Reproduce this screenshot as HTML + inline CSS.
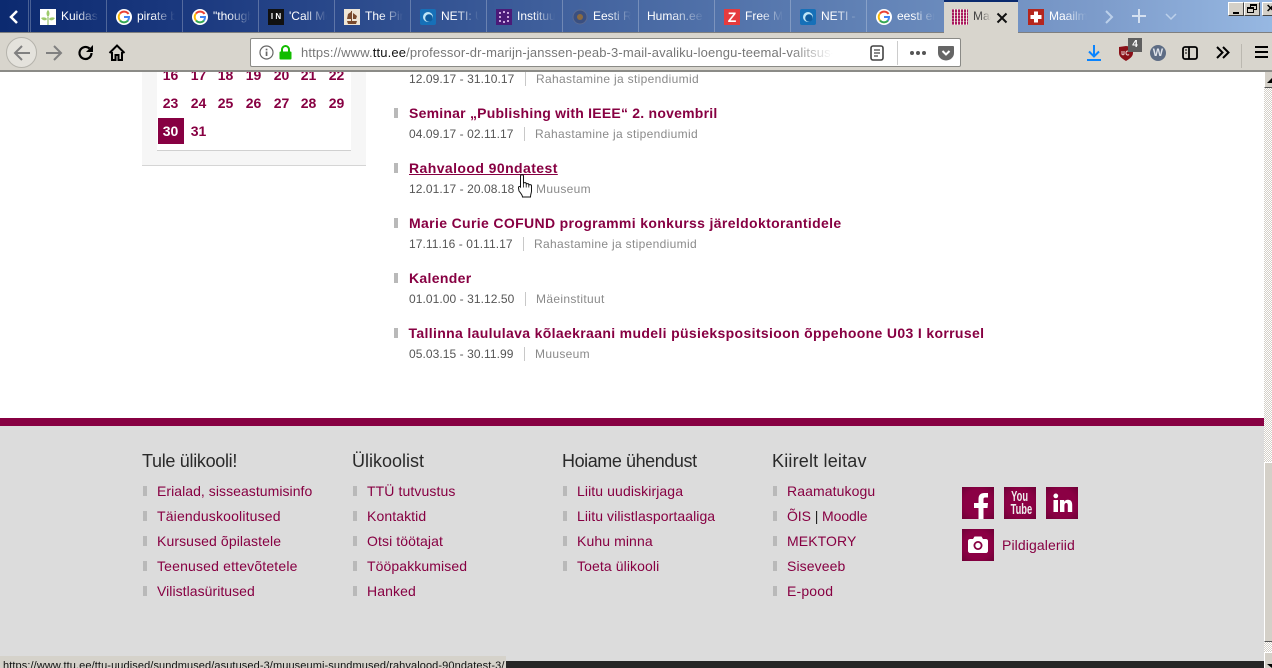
<!DOCTYPE html>
<html><head><meta charset="utf-8"><style>
*{box-sizing:border-box}
html,body{margin:0;padding:0;width:1272px;height:668px;overflow:hidden;background:#fff;font-family:"Liberation Sans",sans-serif}
.a{position:absolute;white-space:nowrap}
#tabs{position:absolute;left:0;top:0;width:1272px;height:33px;background:linear-gradient(90deg,#0c2a70 0,#1c3a80 200px,#3a5a98 500px,#5f80b4 850px,#7d9ccb 1100px,#97b8e2 1272px);border-bottom:1px solid #7f7f7f}
.sep{position:absolute;top:0;width:1px;height:32px;background:rgba(255,255,255,.25)}
.tt{position:absolute;top:9px;font-size:12px;line-height:15px;color:#fff;width:38px;overflow:hidden;white-space:nowrap;-webkit-mask-image:linear-gradient(90deg,#000 40%,transparent 100%);mask-image:linear-gradient(90deg,#000 40%,transparent 100%)}
.fi{position:absolute;top:9px;width:16px;height:16px}
#bar{position:absolute;left:0;top:33px;width:1272px;height:39px;background:#d8d5cd;border-bottom:2px solid #8b8b87}
.t{position:absolute;left:409px;font-size:14px;font-weight:bold;color:#870042;line-height:16px;white-space:nowrap;letter-spacing:.32px}
.d{position:absolute;left:409px;font-size:12px;color:#555;line-height:14px;white-space:nowrap;letter-spacing:.07px}
.c{position:absolute;font-size:12px;color:#8a8a8a;line-height:14px;white-space:nowrap;letter-spacing:.33px}
.v{position:absolute;width:1px;height:14px;background:#c8c8c8}
.b{position:absolute;left:394px;width:4px;height:10px;background:#b9b9b9}
.n{position:absolute;font-size:14px;font-weight:bold;color:#870042;line-height:16px;width:27px;text-align:center}
.h{position:absolute;font-size:18px;line-height:20px;color:#2a2a2a;white-space:nowrap}
.l{position:absolute;font-size:14px;line-height:16px;color:#870042;white-space:nowrap;letter-spacing:.1px}
.s{position:absolute;width:4px;height:10px;background:#b9b9b9}
.so{position:absolute;width:32px;height:32px;background:radial-gradient(circle,#8b0044 60%,#6e0036 100%)}
</style></head><body>

<!-- page content -->
<div class="a" style="left:142px;top:72px;width:224px;height:94px;background:#f6f6f6;border-bottom:1px solid #d5d5d5"></div>
<div class="a" style="left:157px;top:72px;width:194px;height:79px;background:#fff;border-bottom:1px solid #d0d0d0"></div>
<div class="n" style="left:157px;top:67px">16</div><div class="n" style="left:185px;top:67px">17</div><div class="n" style="left:212px;top:67px">18</div><div class="n" style="left:240px;top:67px">19</div><div class="n" style="left:268px;top:67px">20</div><div class="n" style="left:295px;top:67px">21</div><div class="n" style="left:323px;top:67px">22</div>
<div class="n" style="left:157px;top:95px">23</div><div class="n" style="left:185px;top:95px">24</div><div class="n" style="left:212px;top:95px">25</div><div class="n" style="left:240px;top:95px">26</div><div class="n" style="left:268px;top:95px">27</div><div class="n" style="left:295px;top:95px">28</div><div class="n" style="left:323px;top:95px">29</div>
<div class="a" style="left:158px;top:118px;width:26px;height:26px;background:#870042"></div>
<div class="n" style="left:157px;top:123px;color:#fff">30</div><div class="n" style="left:185px;top:123px">31</div>

<div class="d" style="top:72px">12.09.17 - 31.10.17</div><div class="v" style="left:525px;top:72px"></div><div class="c" style="left:536px;top:72px">Rahastamine ja stipendiumid</div>

<div class="b" style="top:108px"></div><div class="t" style="top:105px;letter-spacing:.227px">Seminar „Publishing with IEEE“ 2. novembril</div>
<div class="d" style="top:127px">04.09.17 - 02.11.17</div><div class="v" style="left:524px;top:127px"></div><div class="c" style="left:535px;top:127px">Rahastamine ja stipendiumid</div>

<div class="b" style="top:163px"></div><div class="t" style="top:160px;text-decoration:underline;letter-spacing:.42px">Rahvalood 90ndatest</div>
<div class="d" style="top:182px">12.01.17 - 20.08.18</div><div class="v" style="left:525px;top:182px"></div><div class="c" style="left:536px;top:182px">Muuseum</div>

<div class="b" style="top:218px"></div><div class="t" style="top:215px;letter-spacing:.355px">Marie Curie COFUND programmi konkurss järeldoktorantidele</div>
<div class="d" style="top:237px">17.11.16 - 01.11.17</div><div class="v" style="left:523px;top:237px"></div><div class="c" style="left:534px;top:237px">Rahastamine ja stipendiumid</div>

<div class="b" style="top:273px"></div><div class="t" style="top:270px">Kalender</div>
<div class="d" style="top:292px">01.01.00 - 31.12.50</div><div class="v" style="left:525px;top:292px"></div><div class="c" style="left:536px;top:292px">Mäeinstituut</div>

<div class="b" style="top:328px"></div><div class="t" style="top:325px;left:408.5px;letter-spacing:.345px">Tallinna laululava kõlaekraani mudeli püsiekspositsioon õppehoone U03 I korrusel</div>
<div class="d" style="top:347px">05.03.15 - 30.11.99</div><div class="v" style="left:524px;top:347px"></div><div class="c" style="left:535px;top:347px">Muuseum</div>

<!-- hand cursor -->
<svg class="a" style="left:518px;top:174px" width="16" height="24" viewBox="0 0 16 24"><path d="M2.500 11V2c0-1.700 3-1.700 3 0v7.500c0-1.200 2.700-1.200 2.700 0v1c0-1.200 2.600-1.200 2.600 0v1c0-1.200 2.700-1.200 2.700 0.300V17c0 2-1 3-1 6H4.500c0-2-2-4-3.500-6L.5 14c-.4-1.400 1.200-2 2-1z" fill="#fff" stroke="#111" stroke-width="1"/><path d="M5.500 9.500v4M8.200 10.500v3M10.800 11.500v2" stroke="#111" stroke-width=".8" fill="none"/></svg>

<!-- footer -->
<div class="a" style="left:0;top:418px;width:1264px;height:8px;background:#870042"></div>
<div class="a" style="left:0;top:426px;width:1264px;height:235px;background:#dcdcdc"></div>
<div class="a" style="left:0;top:661px;width:1264px;height:7px;background:#262626"></div>

<div class="h" style="left:142px;top:451px;letter-spacing:-.31px">Tule ülikooli!</div>
<div class="h" style="left:352px;top:451px;letter-spacing:0">Ülikoolist</div>
<div class="h" style="left:562px;top:451px;letter-spacing:-.43px">Hoiame ühendust</div>
<div class="h" style="left:772px;top:451px;letter-spacing:.19px">Kiirelt leitav</div>

<div class="s" style="left:143px;top:486px"></div><div class="l" style="left:157px;top:483px;letter-spacing:.05px">Erialad, sisseastumisinfo</div>
<div class="s" style="left:143px;top:511px"></div><div class="l" style="left:157px;top:508px;letter-spacing:.17px">Täienduskoolitused</div>
<div class="s" style="left:143px;top:536px"></div><div class="l" style="left:157px;top:533px">Kursused õpilastele</div>
<div class="s" style="left:143px;top:561px"></div><div class="l" style="left:157px;top:558px;letter-spacing:.17px">Teenused ettevõtetele</div>
<div class="s" style="left:143px;top:586px"></div><div class="l" style="left:157px;top:583px;letter-spacing:.05px">Vilistlasüritused</div>

<div class="s" style="left:353px;top:486px"></div><div class="l" style="left:367px;top:483px">TTÜ tutvustus</div>
<div class="s" style="left:353px;top:511px"></div><div class="l" style="left:367px;top:508px">Kontaktid</div>
<div class="s" style="left:353px;top:536px"></div><div class="l" style="left:367px;top:533px">Otsi töötajat</div>
<div class="s" style="left:353px;top:561px"></div><div class="l" style="left:367px;top:558px">Tööpakkumised</div>
<div class="s" style="left:353px;top:586px"></div><div class="l" style="left:367px;top:583px">Hanked</div>

<div class="s" style="left:563px;top:486px"></div><div class="l" style="left:577px;top:483px">Liitu uudiskirjaga</div>
<div class="s" style="left:563px;top:511px"></div><div class="l" style="left:577px;top:508px;letter-spacing:.08px">Liitu vilistlasportaaliga</div>
<div class="s" style="left:563px;top:536px"></div><div class="l" style="left:577px;top:533px">Kuhu minna</div>
<div class="s" style="left:563px;top:561px"></div><div class="l" style="left:577px;top:558px">Toeta ülikooli</div>

<div class="s" style="left:773px;top:486px"></div><div class="l" style="left:787px;top:483px">Raamatukogu</div>
<div class="s" style="left:773px;top:511px"></div><div class="l" style="left:787px;top:508px;letter-spacing:-.08px">ÕIS <span style="color:#222">|</span> Moodle</div>
<div class="s" style="left:773px;top:536px"></div><div class="l" style="left:787px;top:533px">MEKTORY</div>
<div class="s" style="left:773px;top:561px"></div><div class="l" style="left:787px;top:558px">Siseveeb</div>
<div class="s" style="left:773px;top:586px"></div><div class="l" style="left:787px;top:583px;letter-spacing:.17px">E-pood</div>

<div class="so" style="left:962px;top:487px"><svg width="32" height="32" style="display:block"><path d="M16.500 32V21H12v-5h4.500v-4c0-4 2-6 6-6H26v4.500h-2.500c-1.500 0-2 .5-2 2V16H26l-.5 5h-4v11z" fill="#fff"/></svg></div>
<div class="so" style="left:1004px;top:487px;color:#eee;text-align:center;font-weight:bold;font-size:15px;line-height:13px;padding-top:3px;overflow:hidden"><span style="display:inline-block;transform:scaleX(.62)">You</span><br><span style="display:inline-block;transform:scaleX(.62)">Tube</span></div>
<div class="so" style="left:1046px;top:487px"><svg width="32" height="32" style="display:block"><path d="M7.500 13H12v12H7.500zM9.800 6.500a2.400 2.400 0 1 1 0 4.800 2.400 2.400 0 0 1 0-4.800zM14 13h4.200v1.700c.8-1.200 2-2 3.700-2 3 0 4.300 2 4.300 5V25h-4.400v-6.500c0-1.700-.4-2.500-1.600-2.500s-1.800 1-1.800 2.600V25H14z" fill="#fff"/></svg></div>
<div class="so" style="left:962px;top:529px"><svg width="32" height="32" style="display:block"><path d="M8 10h3l1.500-2.500h7L21 10h3c1 0 2 .8 2 2v10c0 1-1 2-2 2H8c-1 0-2-1-2-2V12c0-1.200 1-2 2-2z" fill="#fff"/><circle cx="16" cy="16.500" r="4.500" fill="#870042"/><circle cx="16" cy="16.500" r="2.700" fill="#fff"/></svg></div>
<div class="l" style="left:1002px;top:537px">Pildigaleriid</div>

<!-- status -->
<div class="a" style="left:0;top:656px;width:506px;height:12px;background:#d5d2ca;overflow:hidden;font-size:11px;line-height:15px;padding:3px 0 0 3px;color:#111;letter-spacing:.1px">https://www.ttu.ee/ttu-uudised/sundmused/asutused-3/muuseumi-sundmused/rahvalood-90ndatest-3/</div>

<!-- scrollbar -->
<div class="a" style="left:1264px;top:72px;width:8px;height:596px;background-color:#fff;background-image:repeating-conic-gradient(#d4d0c8 0 25%,#fff 0 50%);background-size:2px 2px"></div>
<div class="a" style="left:1264px;top:72px;width:8px;height:16px;background:#d4d0c8;border-left:1px solid #fff;border-bottom:1px solid #555"></div>
<div class="a" style="left:1267px;top:78px;width:0;height:0;border-left:5px solid transparent;border-right:5px solid transparent;border-bottom:5px solid #000"></div>
<div class="a" style="left:1264px;top:462px;width:8px;height:180px;background:#d4d0c8;border-left:1px solid #fff;border-top:1px solid #fff;border-bottom:1px solid #555"></div>
<div class="a" style="left:1264px;top:652px;width:8px;height:16px;background:#d4d0c8;border-left:1px solid #fff;border-top:1px solid #fff"></div>
<div class="a" style="left:1267px;top:664px;width:0;height:0;border-left:5px solid transparent;border-right:5px solid transparent;border-top:4px solid #000"></div>

<!-- tab strip -->
<div id="tabs">
<svg class="a" style="left:8px;top:9px" width="12" height="16"><path d="M9 2L3 8l6 6" fill="none" stroke="#fff" stroke-width="2.500"/></svg>
<div class="sep" style="left:28px"></div><div class="sep" style="left:30px"></div><div class="sep" style="left:106px"></div><div class="sep" style="left:182px"></div><div class="sep" style="left:258px"></div><div class="sep" style="left:334px"></div><div class="sep" style="left:410px"></div><div class="sep" style="left:486px"></div><div class="sep" style="left:562px"></div><div class="sep" style="left:638px"></div><div class="sep" style="left:714px"></div><div class="sep" style="left:790px"></div><div class="sep" style="left:866px"></div>

<svg class="fi" style="left:40px" viewBox="0 0 16 16"><rect width="16" height="16" fill="#fff"/><path d="M8 1c2 2 2 5 0 7-2-2-2-5 0-7zM7 10c-1 2-4 2-6-1 2-1 5-1 6 1zM9 10c1 2 4 2 6-1-2-1-5-1-6 1z" fill="#9dca6a"/><rect x="7.500" y="8" width="1" height="8" fill="#7fb04a"/></svg>
<div class="tt" style="left:61px">Kuidas t</div>
<svg class="fi" style="left:116px" viewBox="0 0 16 16"><circle cx="8" cy="8" r="8" fill="#fff"/><path d="M12.500 5A5.300 5.300 0 0 0 4 4.500" fill="none" stroke="#ea4335" stroke-width="2"/><path d="M4 4.500a5.300 5.300 0 0 0 0 7" fill="none" stroke="#fbbc05" stroke-width="2"/><path d="M4 11.500a5.300 5.300 0 0 0 8 0" fill="none" stroke="#34a853" stroke-width="2"/><path d="M8 8h5c0 1.500-.3 2.500-1 3.500" fill="none" stroke="#4285f4" stroke-width="2"/></svg>
<div class="tt" style="left:137px">pirate b</div>
<svg class="fi" style="left:192px" viewBox="0 0 16 16"><circle cx="8" cy="8" r="8" fill="#fff"/><path d="M12.500 5A5.300 5.300 0 0 0 4 4.500" fill="none" stroke="#ea4335" stroke-width="2"/><path d="M4 4.500a5.300 5.300 0 0 0 0 7" fill="none" stroke="#fbbc05" stroke-width="2"/><path d="M4 11.500a5.300 5.300 0 0 0 8 0" fill="none" stroke="#34a853" stroke-width="2"/><path d="M8 8h5c0 1.500-.3 2.500-1 3.500" fill="none" stroke="#4285f4" stroke-width="2"/></svg>
<div class="tt" style="left:213px">"though</div>
<div class="fi a" style="left:268px;background:#111;color:#fff;font-size:8px;line-height:16px;text-align:center;font-weight:bold">I N</div>
<div class="tt" style="left:289px">'Call Me</div>
<svg class="fi" style="left:344px" viewBox="0 0 16 16"><rect width="16" height="16" fill="#efe6d6"/><path d="M3 12h10l-1 3H4zM7 2h1v10H7zM4 5l3-2v7H3zM9 4l4 3-1 3H9z" fill="#7a4a2c"/></svg>
<div class="tt" style="left:365px">The Pira</div>
<svg class="fi" style="left:420px" viewBox="0 0 16 16"><rect width="16" height="16" rx="2" fill="#1670b8"/><circle cx="8" cy="8" r="5" fill="#bfe6f7"/><circle cx="9" cy="9" r="3.800" fill="#0f5c9e"/></svg>
<div class="tt" style="left:441px">NETI: U</div>
<svg class="fi" style="left:496px" viewBox="0 0 16 16"><rect width="16" height="16" fill="#4b1a78"/><g fill="#c9a6dd"><rect x="3" y="3" width="2" height="2"/><rect x="7" y="2" width="2" height="2"/><rect x="11" y="3" width="2" height="2"/><rect x="3" y="7" width="2" height="2"/><rect x="11" y="7" width="2" height="2"/><rect x="3" y="11" width="2" height="2"/><rect x="7" y="12" width="2" height="2"/><rect x="11" y="11" width="2" height="2"/></g></svg>
<div class="tt" style="left:517px">Instituu</div>
<svg class="fi" style="left:572px" viewBox="0 0 16 16"><circle cx="8" cy="8" r="7" fill="#3a4f80" stroke="#5a6a90"/><circle cx="8" cy="8" r="3" fill="#8a6a40"/></svg>
<div class="tt" style="left:593px">Eesti Re</div>
<div class="tt" style="left:647px;width:58px">Human.ee -</div>
<div class="fi a" style="left:724px;background:#e53b3e;color:#fff;font-size:14px;line-height:16px;text-align:center;font-weight:bold">Z</div>
<div class="tt" style="left:745px">Free Mo</div>
<svg class="fi" style="left:800px" viewBox="0 0 16 16"><rect width="16" height="16" rx="2" fill="#1670b8"/><circle cx="8" cy="8" r="5" fill="#bfe6f7"/><circle cx="9" cy="9" r="3.800" fill="#0f5c9e"/></svg>
<div class="tt" style="left:821px">NETI - E</div>
<svg class="fi" style="left:876px" viewBox="0 0 16 16"><circle cx="8" cy="8" r="8" fill="#fff"/><path d="M12.500 5A5.300 5.300 0 0 0 4 4.500" fill="none" stroke="#ea4335" stroke-width="2"/><path d="M4 4.500a5.300 5.300 0 0 0 0 7" fill="none" stroke="#fbbc05" stroke-width="2"/><path d="M4 11.500a5.300 5.300 0 0 0 8 0" fill="none" stroke="#34a853" stroke-width="2"/><path d="M8 8h5c0 1.500-.3 2.500-1 3.500" fill="none" stroke="#4285f4" stroke-width="2"/></svg>
<div class="tt" style="left:897px">eesti er</div>

<div class="a" style="left:944px;top:0;width:74px;height:33px;background:#d8d5cd;border-top:2px solid #0a2a6e"></div>
<div class="fi a" style="left:952px;background:repeating-linear-gradient(0deg,rgba(255,255,255,.35) 0 1px,transparent 1px 3px),repeating-linear-gradient(90deg,#a8195e 0 2px,#eed 2px 3px)"></div>
<div class="tt" style="left:973px;color:#444;width:18px">Maa</div>
<svg class="a" style="left:996px;top:12px" width="12" height="12"><path d="M1.500 1.500l9 9M10.500 1.500l-9 9" stroke="#111" stroke-width="2"/></svg>

<div class="fi a" style="left:1028px;background:#b5261e"></div>
<svg class="fi" style="left:1028px" viewBox="0 0 16 16"><path d="M6 2.500h4V6h3.500v4H10v3.500H6V10H2.500V6H6z" fill="#fff"/></svg>
<div class="tt" style="left:1049px">Maailma</div>
<svg class="a" style="left:1103px;top:9px" width="12" height="16"><path d="M3 2l6 6-6 6" fill="none" stroke="#bcd0ea" stroke-width="2"/></svg>
<svg class="a" style="left:1131px;top:8px" width="16" height="16"><path d="M8 1v14M1 8h14" stroke="#d4e0f0" stroke-width="2"/></svg>
<svg class="a" style="left:1165px;top:13px" width="12" height="8"><path d="M1 1l5 5 5-5" fill="none" stroke="#bcd0ea" stroke-width="1.500"/></svg>
</div>

<!-- window buttons -->
<div class="a" style="left:1228px;top:2px;width:16px;height:14px;background:#d4d0c8;border:1px solid;border-color:#fff #444 #444 #fff"><div class="a" style="left:4px;top:9px;width:6px;height:2px;background:#000"></div></div>
<div class="a" style="left:1244px;top:2px;width:16px;height:14px;background:#d4d0c8;border:1px solid;border-color:#fff #444 #444 #fff"><div class="a" style="left:5px;top:1px;width:7px;height:6px;border:1px solid #000;border-top-width:2px"></div><div class="a" style="left:2px;top:4px;width:7px;height:6px;border:1px solid #000;border-top-width:2px;background:#d4d0c8"></div></div>
<div class="a" style="left:1262px;top:2px;width:16px;height:14px;background:#d4d0c8;border:1px solid;border-color:#fff #444 #444 #fff;font-size:11px;font-weight:bold;line-height:12px;padding-left:3px">✕</div>

<!-- toolbar -->
<div id="bar"></div>
<div class="a" style="left:6px;top:37px;width:31px;height:31px;border-radius:50%;background:#e4e2dc;border:1px solid #b5b3ac"></div>
<svg class="a" style="left:12px;top:44px" width="20" height="18"><path d="M18 9H3M10 2L3 9l7 7" fill="none" stroke="#808080" stroke-width="2"/></svg>
<svg class="a" style="left:44px;top:44px" width="20" height="18"><path d="M2 9h15M10 2l7 7-7 7" fill="none" stroke="#808080" stroke-width="2"/></svg>
<svg class="a" style="left:77px;top:44px" width="18" height="18"><path d="M14.500 9a6 6 0 1 1-2-4.500" fill="none" stroke="#000" stroke-width="2.200"/><path d="M16 1v7h-7z" fill="#000"/></svg>
<svg class="a" style="left:108px;top:44px" width="18" height="18"><path d="M1.500 9L9 1.500 16.500 9M4 8v8h3.500v-5h3v5H14V8" fill="none" stroke="#000" stroke-width="2"/></svg>

<div class="a" style="left:250px;top:38px;width:711px;height:29px;background:#fff;border:1px solid #8a8a86;border-radius:2px"></div>
<svg class="a" style="left:259px;top:45px" width="15" height="15"><circle cx="7.500" cy="7.500" r="6.500" fill="none" stroke="#666" stroke-width="1.200"/><rect x="6.700" y="6.500" width="1.700" height="4.500" fill="#666"/><rect x="6.700" y="3.700" width="1.700" height="1.700" fill="#666"/></svg>
<svg class="a" style="left:279px;top:45px" width="13" height="15"><path d="M3 7V4.500a3.500 3.500 0 0 1 7 0V7" fill="none" stroke="#12bc00" stroke-width="2"/><rect x="0.500" y="6.500" width="12" height="8" rx="1" fill="#12bc00"/></svg>
<div class="a" style="left:301px;top:45px;width:532px;height:16px;overflow:hidden;font-size:13px;line-height:16px;color:#777;letter-spacing:.14px;-webkit-mask-image:linear-gradient(90deg,#000 92%,transparent 100%);mask-image:linear-gradient(90deg,#000 92%,transparent 100%)">https://www.<span style="color:#111">ttu.ee</span>/professor-dr-marijn-janssen-peab-3-mail-avaliku-loengu-teemal-valitsus-tehnoloogia</div>
<svg class="a" style="left:869px;top:45px" width="16" height="16"><rect x="2" y="1" width="12" height="14" rx="2" fill="#fff" stroke="#444" stroke-width="1.600"/><path d="M5 5h6M5 8h6M5 11h4" stroke="#444" stroke-width="1.300"/></svg>
<div class="a" style="left:897px;top:41px;width:1px;height:24px;background:#ccc"></div>
<div class="a" style="left:910px;top:51px;width:4px;height:4px;border-radius:50%;background:#555;box-shadow:6px 0 #555,12px 0 #555"></div>
<svg class="a" style="left:938px;top:45px" width="16" height="16"><path d="M1 1h14c.6 0 1 .4 1 1v6a8 7.500 0 0 1-16 0V2c0-.6.400-1 1-1z" fill="#666"/><path d="M4.500 6L8 9.500 11.500 6" fill="none" stroke="#fff" stroke-width="2"/></svg>

<svg class="a" style="left:1086px;top:44px" width="16" height="18"><path d="M8 1v11M3 7.500l5 5 5-5" fill="none" stroke="#0a84ff" stroke-width="2"/><rect x="1" y="15" width="14" height="2" fill="#0a84ff"/></svg>
<svg class="a" style="left:1119px;top:45px" width="14" height="16"><path d="M0 2l7-1 7 1v6c0 4-4 6-7 8-3-2-7-4-7-8z" fill="#8a1018"/><path d="M3 6v3c0 1 2 1 2 0V6M10 6.500c-1-1-3-.5-3 1.500s2 2.500 3 1.500" fill="none" stroke="#e8d0d0" stroke-width="1"/></svg>
<div class="a" style="left:1128px;top:38px;width:14px;height:14px;background:#5f5f5f;color:#fff;font-size:10px;font-weight:bold;line-height:14px;text-align:center">4</div>
<div class="a" style="left:1150px;top:45px;width:16px;height:16px;border-radius:50%;background:#5d6c84;color:#dfe3ea;font-size:11px;font-weight:bold;line-height:16px;text-align:center">W</div>
<svg class="a" style="left:1182px;top:45px" width="16" height="16"><rect x="1" y="2" width="14" height="12" rx="2" fill="none" stroke="#000" stroke-width="1.800"/><path d="M7 2v12" stroke="#000" stroke-width="1.800"/><path d="M3 5h2M3 8h2" stroke="#000"/></svg>
<svg class="a" style="left:1215px;top:45px" width="15" height="15"><path d="M2 2l5.500 5.500L2 13M8 2l5.500 5.500L8 13" fill="none" stroke="#000" stroke-width="2"/></svg>
<div class="a" style="left:1241px;top:44px;width:1px;height:24px;background:#bbb8b0"></div>
<div class="a" style="left:1255px;top:46px;width:13px;height:2px;background:#000;box-shadow:0 5px #000,0 10px #000"></div>

</body></html>
